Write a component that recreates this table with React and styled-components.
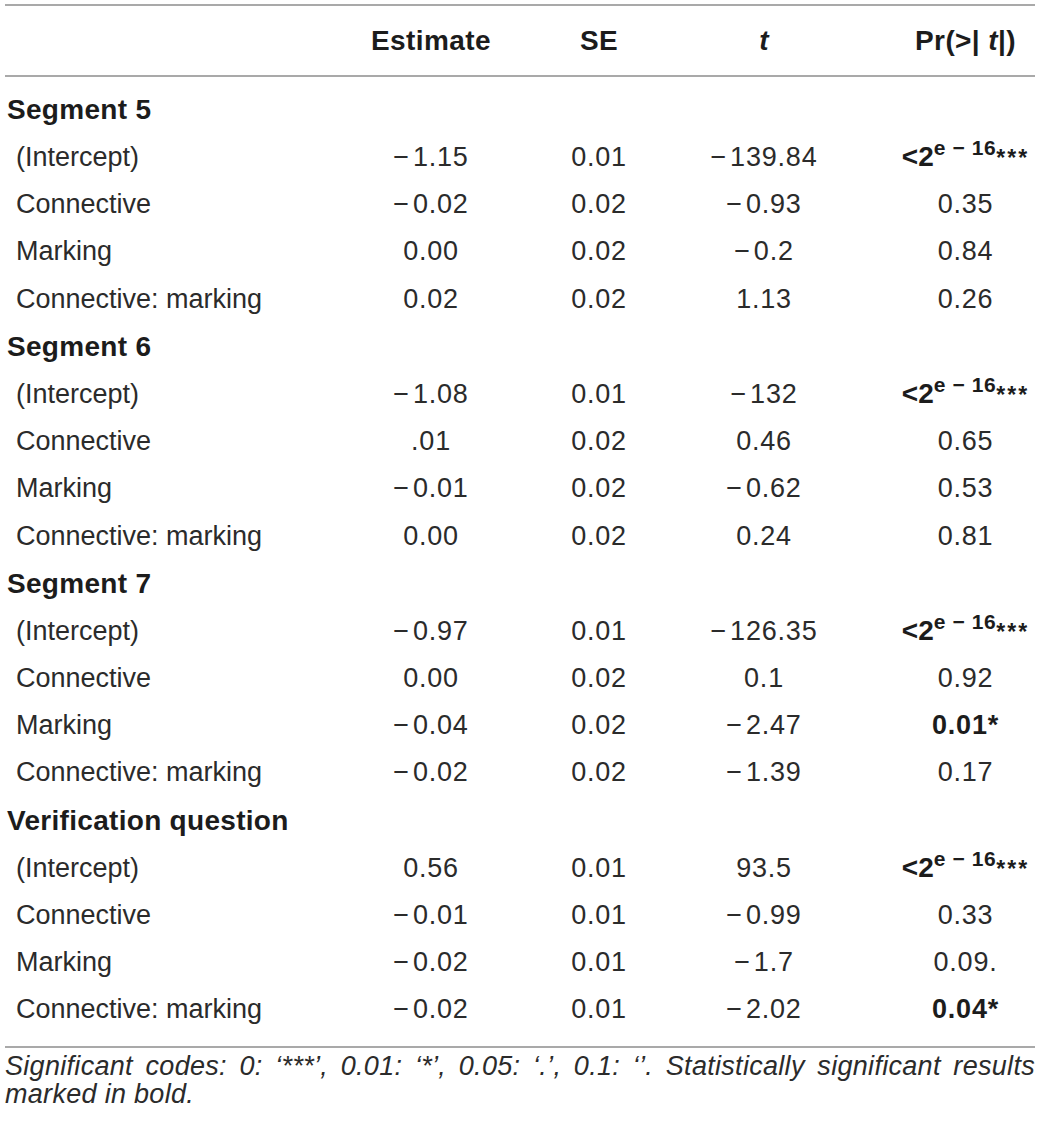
import React from "react";
import styled, { createGlobalStyle } from "styled-components";

const GlobalStyle = createGlobalStyle`
  html, body {
    margin: 0;
    padding: 0;
    background: #fff;
  }
  body {
    font-family: "Liberation Sans", Arial, Helvetica, sans-serif;
    color: #2b2b2b;
  }
`;

const COLS = "341px 170px 166px 164px 189px";
const RULE = "2px solid #a9a9a9";

const Page = styled.div`
  width: 1030px;
  padding: 4px 5px 0;
`;

const Table = styled.div`
  border-top: ${RULE};
  border-bottom: ${RULE};
`;

const HeaderRow = styled.div`
  display: grid;
  grid-template-columns: ${COLS};
  align-items: center;
  height: 69px;
  border-bottom: ${RULE};
  font-size: 28px;
  font-weight: bold;
  letter-spacing: 0.4px;
  color: #1c1c1c;
`;

const HeadCell = styled.div`
  text-align: center;
  padding-left: ${(p) => (p.$last ? "50px" : "0")};
`;

const Body = styled.div`
  padding: 9px 0 12px;
`;

const Row = styled.div`
  display: grid;
  grid-template-columns: ${COLS};
  align-items: center;
  height: 47.4px;
  line-height: 47.4px;
  font-size: 27px;
  white-space: nowrap;
`;

const Cell = styled.div`
  text-align: center;
  letter-spacing: 0.8px;
  padding-left: ${(p) => (p.$last ? "50px" : "0")};
  font-weight: ${(p) => (p.$bold ? "bold" : "normal")};
  color: ${(p) => (p.$bold ? "#1c1c1c" : "#2b2b2b")};
`;

const Label = styled.div`
  padding-left: ${(p) => (p.$section ? "2px" : "11px")};
  font-size: ${(p) => (p.$section ? "28px" : "27px")};
  letter-spacing: ${(p) => (p.$section ? "0.3px" : "0")};
  font-weight: ${(p) => (p.$section ? "bold" : "normal")};
  color: ${(p) => (p.$section ? "#1c1c1c" : "#2b2b2b")};
`;

const Ital = styled.i`
  font-style: italic;
`;

const PValue = styled.span`
  font-weight: bold;
  color: #1c1c1c;
  font-size: 28px;
  letter-spacing: 0;
  sup {
    font-size: 21px;
    vertical-align: 11px;
    line-height: 0;
    letter-spacing: 0.6px;
  }
`;

const Stars = styled.span`
  font-size: 23px;
  letter-spacing: 2px;
`;

const Footnote = styled.p`
  margin: 4px 0 0;
  font-size: 27px;
  line-height: 28px;
  letter-spacing: 0.3px;
  font-style: italic;
  text-align: justify;
  color: #2b2b2b;
`;

const Tiny = () => (
  <PValue>
    &lt;2<sup>e − 16</sup>
    <Stars>***</Stars>
  </PValue>
);

// minus sign followed by a hair space, as typeset in the source table
const num = (v) => v.replace("-", "\u2212\u200a");

const sections = [
  {
    title: "Segment 5",
    rows: [
      ["(Intercept)", "-1.15", "0.01", "-139.84", "tiny"],
      ["Connective", "-0.02", "0.02", "-0.93", "0.35"],
      ["Marking", "0.00", "0.02", "-0.2", "0.84"],
      ["Connective: marking", "0.02", "0.02", "1.13", "0.26"],
    ],
  },
  {
    title: "Segment 6",
    rows: [
      ["(Intercept)", "-1.08", "0.01", "-132", "tiny"],
      ["Connective", ".01", "0.02", "0.46", "0.65"],
      ["Marking", "-0.01", "0.02", "-0.62", "0.53"],
      ["Connective: marking", "0.00", "0.02", "0.24", "0.81"],
    ],
  },
  {
    title: "Segment 7",
    rows: [
      ["(Intercept)", "-0.97", "0.01", "-126.35", "tiny"],
      ["Connective", "0.00", "0.02", "0.1", "0.92"],
      ["Marking", "-0.04", "0.02", "-2.47", "0.01*", true],
      ["Connective: marking", "-0.02", "0.02", "-1.39", "0.17"],
    ],
  },
  {
    title: "Verification question",
    rows: [
      ["(Intercept)", "0.56", "0.01", "93.5", "tiny"],
      ["Connective", "-0.01", "0.01", "-0.99", "0.33"],
      ["Marking", "-0.02", "0.01", "-1.7", "0.09."],
      ["Connective: marking", "-0.02", "0.01", "-2.02", "0.04*", true],
    ],
  },
];

export default function App() {
  return (
    <Page>
      <GlobalStyle />
      <Table>
        <HeaderRow>
          <div />
          <HeadCell>Estimate</HeadCell>
          <HeadCell>SE</HeadCell>
          <HeadCell>
            <Ital>t</Ital>
          </HeadCell>
          <HeadCell $last>
            Pr(&gt;| <Ital>t</Ital>|)
          </HeadCell>
        </HeaderRow>
        <Body>
          {sections.map((s) => (
            <React.Fragment key={s.title}>
              <Row>
                <Label $section>{s.title}</Label>
              </Row>
              {s.rows.map((r, i) => (
                <Row key={s.title + i}>
                  <Label>{r[0]}</Label>
                  <Cell>{num(r[1])}</Cell>
                  <Cell>{num(r[2])}</Cell>
                  <Cell>{num(r[3])}</Cell>
                  <Cell $last $bold={r[5]}>
                    {r[4] === "tiny" ? <Tiny /> : r[4]}
                  </Cell>
                </Row>
              ))}
            </React.Fragment>
          ))}
        </Body>
      </Table>
      <Footnote>
        Significant codes: 0: ‘***’, 0.01: ‘*’, 0.05: ‘.’, 0.1: ‘’. Statistically
        significant results marked in bold.
      </Footnote>
    </Page>
  );
}
